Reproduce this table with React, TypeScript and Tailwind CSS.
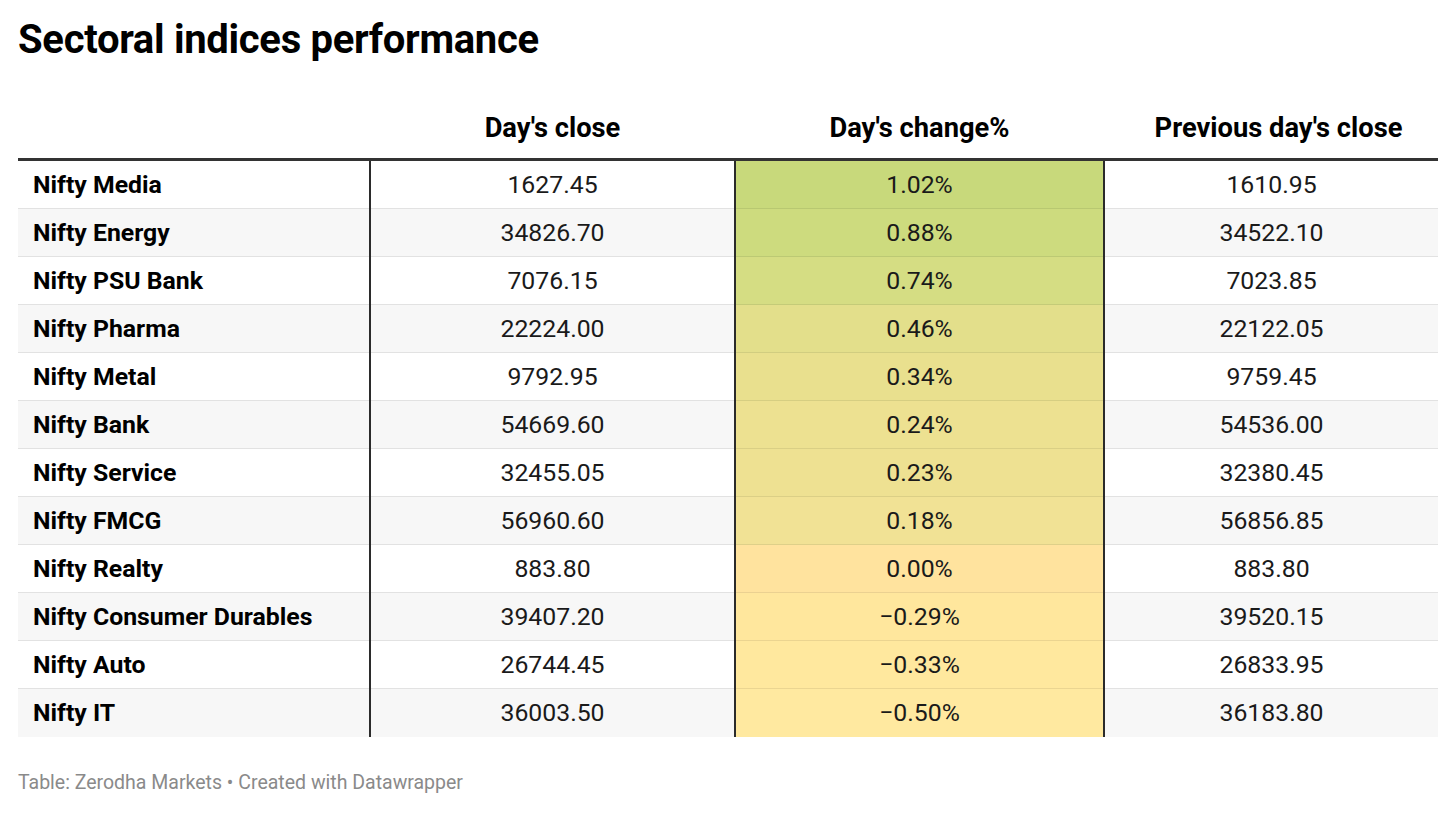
const rows = [
  { name: 'Nifty Media', close: '1627.45', change: '1.02%', prev: '1610.95', bg: 'bg-[#c8d97b]' },
  { name: 'Nifty Energy', close: '34826.70', change: '0.88%', prev: '34522.10', bg: 'bg-[#cddb7e]' },
  { name: 'Nifty PSU Bank', close: '7076.15', change: '0.74%', prev: '7023.85', bg: 'bg-[#d5dd83]' },
  { name: 'Nifty Pharma', close: '22224.00', change: '0.46%', prev: '22122.05', bg: 'bg-[#e3df8b]' },
  { name: 'Nifty Metal', close: '9792.95', change: '0.34%', prev: '9759.45', bg: 'bg-[#e9e08e]' },
  { name: 'Nifty Bank', close: '54669.60', change: '0.24%', prev: '54536.00', bg: 'bg-[#ede191]' },
  { name: 'Nifty Service', close: '32455.05', change: '0.23%', prev: '32380.45', bg: 'bg-[#eee192]' },
  { name: 'Nifty FMCG', close: '56960.60', change: '0.18%', prev: '56856.85', bg: 'bg-[#f1e295]' },
  { name: 'Nifty Realty', close: '883.80', change: '0.00%', prev: '883.80', bg: 'bg-[#ffe39e]' },
  { name: 'Nifty Consumer Durables', close: '39407.20', change: '−0.29%', prev: '39520.15', bg: 'bg-[#ffe79d]' },
  { name: 'Nifty Auto', close: '26744.45', change: '−0.33%', prev: '26833.95', bg: 'bg-[#ffe89e]' },
  { name: 'Nifty IT', close: '36003.50', change: '−0.50%', prev: '36183.80', bg: 'bg-[#ffe9a0]' },
];

export default function App() {
  return (
    <div className="w-[1456px] h-[813px] bg-white px-[18px] pt-[16px] text-[#1a1a1a] font-['Roboto',sans-serif]">
      <h1 className="text-[40px] leading-[48px] font-bold tracking-[-0.3px] text-black">
        Sectoral indices performance
      </h1>

      <div className="mt-[35px] w-[1420px]">
        <div className="flex h-[62px] items-end border-b-[3px] border-[#333333] pb-[13px] text-[27.3px] font-bold leading-[34px] text-black">
          <div className="w-[353px]" />
          <div className="w-[363px] text-center">Day's close</div>
          <div className="w-[371px] text-center">Day's change%</div>
          <div className="w-[333px] pl-[14px] text-center">Previous day's close</div>
        </div>

        {rows.map((r, i) => (
          <div
            key={r.name}
            className={`flex h-[48px] text-[24.8px] ${i % 2 === 1 ? 'bg-[#f7f7f7]' : 'bg-white'}`}
          >
            <div
              className={`flex w-[353px] items-center border-r-2 border-[#2b2b2b] pl-[15px] font-bold text-black ${i < rows.length - 1 ? 'shadow-[inset_0_-1px_0_#e2e2e2]' : ''}`}
            >
              {r.name}
            </div>
            <div
              className={`flex w-[363px] items-center justify-center ${i < rows.length - 1 ? 'shadow-[inset_0_-1px_0_#e2e2e2]' : ''}`}
            >
              {r.close}
            </div>
            <div
              className={`flex w-[371px] items-center justify-center border-x-2 border-[#2b2b2b] ${r.bg} ${i < rows.length - 1 ? 'shadow-[inset_0_-1px_0_rgba(0,0,0,0.08)]' : ''}`}
            >
              {r.change}
            </div>
            <div
              className={`flex w-[333px] items-center justify-center ${i < rows.length - 1 ? 'shadow-[inset_0_-1px_0_#e2e2e2]' : ''}`}
            >
              {r.prev}
            </div>
          </div>
        ))}
      </div>

      <p className="mt-[33px] text-[19.5px] leading-[26px] text-[#8a8a8a]">
        Table: Zerodha Markets • Created with Datawrapper
      </p>
    </div>
  );
}
